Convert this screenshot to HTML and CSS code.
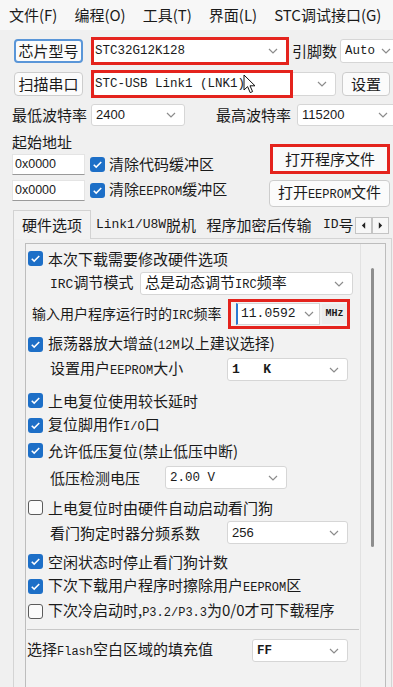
FILE: index.html
```html
<!DOCTYPE html>
<html lang="zh-CN">
<head>
    <meta charset="UTF-8">
    <meta name="viewport" content="width=device-width, initial-scale=1.0">
    <title>STC-ISP</title>
    <link rel="stylesheet" href="styles.css">
</head>
<body>
    <div class="menubar">
        <span>文件(F)</span>
        <span>编程(O)</span>
        <span>工具(T)</span>
        <span>界面(L)</span>
        <span>STC调试接口(G)</span>
    </div>

    <div class="row row-chip">
        <button class="btn btn-focus btn-chip">芯片型号</button>
        <div class="redbox box-chip">
            <div class="combo">
                <span class="val">STC32G12K128</span>
                <svg class="chev" viewBox="0 0 10 6"><path d="M1 1l4 4 4-4"/></svg>
            </div>
        </div>
        <span class="lbl lbl-pin">引脚数</span>
        <div class="combo combo-pin">
            <span class="val">Auto</span>
            <svg class="chev" viewBox="0 0 10 6"><path d="M1 1l4 4 4-4"/></svg>
        </div>
    </div>

    <div class="row row-port">
        <button class="btn btn-port">扫描串口</button>
        <div class="combo combo-port">
            <span class="val">STC-USB Link1 (LNK1)</span>
            <svg class="chev" viewBox="0 0 10 6"><path d="M1 1l4 4 4-4"/></svg>
            <div class="redbox mark-port"></div>
            <svg class="cursor" viewBox="0 0 13 20"><path d="M1 1v15l3.6-3.4 2.6 6 2.4-1-2.6-5.8H12z"/></svg>
        </div>
        <button class="btn btn-set">设置</button>
    </div>

    <div class="row row-baud">
        <span class="lbl">最低波特率</span>
        <div class="combo combo-lo">
            <span class="val sans">2400</span>
            <svg class="chev" viewBox="0 0 10 6"><path d="M1 1l4 4 4-4"/></svg>
        </div>
        <span class="lbl lbl-hi">最高波特率</span>
        <div class="combo combo-hi">
            <span class="val sans">115200</span>
            <svg class="chev" viewBox="0 0 10 6"><path d="M1 1l4 4 4-4"/></svg>
        </div>
    </div>

    <div class="addr">
        <div class="addr-left">
            <div class="lbl addr-title">起始地址</div>
            <div class="row addr-row">
                <div class="edit">0x0000</div>
                <span class="check on"><svg viewBox="0 0 16 16"><path d="M4 8.2l2.6 2.6L12 5.4"/></svg></span>
                <span class="lbl">清除代码缓冲区</span>
            </div>
            <div class="row addr-row">
                <div class="edit">0x0000</div>
                <span class="check on"><svg viewBox="0 0 16 16"><path d="M4 8.2l2.6 2.6L12 5.4"/></svg></span>
                <span class="lbl">清除<span class="m">EEPROM</span>缓冲区</span>
            </div>
        </div>
        <div class="addr-right">
            <div class="redbox box-open">打开程序文件</div>
            <button class="btn btn-eeprom">打开<span class="m">EEPROM</span>文件</button>
        </div>
    </div>

    <div class="tabs">
        <div class="tab active">硬件选项</div>
        <div class="tab tab-link"><span class="m tm">Link1/U8W</span>脱机</div>
        <div class="tab tab-enc">程序加密后传输</div>
        <div class="tab tab-id"><span class="m tm">ID</span>号</div>
        <div class="tab-arrows">
            <span><svg viewBox="0 0 6 8"><path d="M5 0v8L1 4z"/></svg></span>
            <span><svg viewBox="0 0 6 8"><path d="M1 0v8l4-4z"/></svg></span>
        </div>
    </div>

    <div class="panel">
        <div class="group">
            <div class="group-body">
                <div class="row opt">
                    <span class="check on"><svg viewBox="0 0 16 16"><path d="M4 8.2l2.6 2.6L12 5.4"/></svg></span>
                    <span class="lbl">本次下载需要修改硬件选项</span>
                </div>
                <div class="row field">
                    <span class="lbl fl-in"><span class="m tm">IRC</span>调节模式</span>
                    <div class="combo c-mode">
                        <span class="val cjk">总是动态调节<span class="m">IRC</span>频率</span>
                        <svg class="chev" viewBox="0 0 10 6"><path d="M1 1l4 4 4-4"/></svg>
                    </div>
                </div>
                <div class="row field field-irc mt3">
                    <span class="lbl fl-irc">输入用户程序运行时的<span class="m">IRC</span>频率</span>
                    <div class="redbox box-irc">
                        <div class="combo c-freq">
                            <span class="val big">11.0592</span>
                            <svg class="chev" viewBox="0 0 10 6"><path d="M1 1l4 4 4-4"/></svg>
                        </div>
                        <span class="unit">MHz</span>
                    </div>
                </div>
                <div class="row opt mt3">
                    <span class="check on"><svg viewBox="0 0 16 16"><path d="M4 8.2l2.6 2.6L12 5.4"/></svg></span>
                    <span class="lbl">振荡器放大增益(<span class="m">12M</span>以上建议选择)</span>
                </div>
                <div class="row field">
                    <span class="lbl fl-in">设置用户<span class="m">EEPROM</span>大小</span>
                    <div class="combo c-size">
                        <span class="val mid">1   K</span>
                        <svg class="chev" viewBox="0 0 10 6"><path d="M1 1l4 4 4-4"/></svg>
                    </div>
                </div>
                <div class="row opt mt6">
                    <span class="check on"><svg viewBox="0 0 16 16"><path d="M4 8.2l2.6 2.6L12 5.4"/></svg></span>
                    <span class="lbl">上电复位使用较长延时</span>
                </div>
                <div class="row opt">
                    <span class="check on"><svg viewBox="0 0 16 16"><path d="M4 8.2l2.6 2.6L12 5.4"/></svg></span>
                    <span class="lbl">复位脚用作<span class="m">I/O</span>口</span>
                </div>
                <div class="row opt">
                    <span class="check on"><svg viewBox="0 0 16 16"><path d="M4 8.2l2.6 2.6L12 5.4"/></svg></span>
                    <span class="lbl">允许低压复位(禁止低压中断)</span>
                </div>
                <div class="row field mt2">
                    <span class="lbl fl-in fl-volt">低压检测电压</span>
                    <div class="combo c-volt">
                        <span class="val">2.00 V</span>
                        <svg class="chev" viewBox="0 0 10 6"><path d="M1 1l4 4 4-4"/></svg>
                    </div>
                </div>
                <div class="row opt mt5">
                    <span class="check off"></span>
                    <span class="lbl">上电复位时由硬件自动启动看门狗</span>
                </div>
                <div class="row field">
                    <span class="lbl fl-in">看门狗定时器分频系数</span>
                    <div class="combo c-size">
                        <span class="val sans">256</span>
                        <svg class="chev" viewBox="0 0 10 6"><path d="M1 1l4 4 4-4"/></svg>
                    </div>
                </div>
                <div class="row opt mt4">
                    <span class="check on"><svg viewBox="0 0 16 16"><path d="M4 8.2l2.6 2.6L12 5.4"/></svg></span>
                    <span class="lbl">空闲状态时停止看门狗计数</span>
                </div>
                <div class="row opt">
                    <span class="check on"><svg viewBox="0 0 16 16"><path d="M4 8.2l2.6 2.6L12 5.4"/></svg></span>
                    <span class="lbl">下次下载用户程序时擦除用户<span class="m">EEPROM</span>区</span>
                </div>
                <div class="row opt">
                    <span class="check off"></span>
                    <span class="lbl">下次冷启动时,<span class="m">P3.2/P3.3</span>为0/0才可下载程序</span>
                </div>
                <div class="sep"></div>
                <div class="row field mt8">
                    <span class="lbl fl-fill">选择<span class="m">Flash</span>空白区域的填充值</span>
                    <div class="combo c-fill">
                        <span class="val bold">FF</span>
                        <svg class="chev" viewBox="0 0 10 6"><path d="M1 1l4 4 4-4"/></svg>
                    </div>
                </div>
            </div>
            <div class="scroll"><div class="thumb"></div></div>
        </div>
    </div>
</body>
</html>
```

FILE: styles.css
```css
* {
    box-sizing: border-box;
}
body {
    margin: 0;
    width: 393px;
    height: 687px;
    overflow: hidden;
    background: #f0f0f0;
    color: #1a1a1a;
    font-family: "Noto Sans CJK SC", "Liberation Sans", sans-serif;
    font-size: 15px;
    line-height: 20px;
}
.m {
    font-family: "Liberation Mono", monospace;
    font-size: 12px;
}
.menubar {
    height: 30px;
    display: flex;
    align-items: center;
    gap: 17px;
    padding-left: 9px;
    background: #f7f7f7;
}
.row {
    display: flex;
    align-items: center;
}
.row > * {
    flex-shrink: 0;
}
.lbl {
    white-space: nowrap;
}
.btn {
    height: 24px;
    padding: 0;
    border: 1px solid #cdcdcd;
    border-radius: 4px;
    background: #fbfbfb;
    color: inherit;
    font: inherit;
    line-height: 20px;
}
.btn-focus {
    border: 2px solid #5a96d8;
}
.combo {
    position: relative;
    display: flex;
    align-items: center;
    height: 23px;
    padding-left: 4px;
    background: #fff;
    border: 1px solid #d6d6d6;
    border-radius: 3px;
}
.combo .val {
    flex: 1;
    white-space: pre;
    overflow: hidden;
    font-family: "Liberation Mono", monospace;
    font-size: 12.5px;
}
.combo .val.sans {
    font-family: "Liberation Sans", sans-serif;
    font-size: 13px;
}
.combo .val.cjk {
    font-family: "Noto Sans CJK SC", sans-serif;
    font-size: 15px;
}
.combo .val.big {
    font-size: 13px;
}
.combo .val.mid {
    font-size: 13px;
    font-weight: bold;
}
.combo .val.bold {
    font-weight: bold;
}
.chev {
    width: 10px;
    height: 6px;
    margin-right: 8px;
    flex-shrink: 0;
    fill: none;
    stroke: #8c8c8c;
    stroke-width: 1.2;
}
.redbox {
    border: 3px solid #e4231d;
}

/* top rows */
.row-chip {
    height: 28px;
    margin-top: 7px;
    padding-left: 14px;
}
.btn-chip {
    width: 69px;
}
.box-chip {
    width: 198px;
    height: 28px;
    margin-left: 8px;
}
.box-chip .combo {
    height: 100%;
    border: none;
    border-radius: 0;
    padding-left: 1px;
}
.lbl-pin {
    margin-left: 3px;
}
.combo-pin {
    width: 60px;
    height: 24px;
    margin-left: 3px;
}
.row-port {
    height: 28px;
    margin-top: 5px;
    padding-left: 14px;
}
.btn-port {
    width: 69px;
}
.combo-port {
    width: 243px;
    height: 24px;
    margin-left: 10px;
    padding-left: 1px;
}
.mark-port {
    position: absolute;
    left: -3px;
    top: -3px;
    width: 202px;
    height: 28px;
}
.cursor {
    position: absolute;
    left: 149px;
    top: 1px;
    width: 13px;
    height: 20px;
    fill: #fff;
    stroke: #111;
    stroke-width: 1;
}
.btn-set {
    width: 48px;
    margin-left: 6px;
}
.row-baud {
    height: 22px;
    margin-top: 6px;
    padding-left: 12px;
}
.combo-lo {
    width: 94px;
    height: 22px;
    margin-left: 4px;
}
.lbl-hi {
    margin-left: 31px;
}
.combo-hi {
    width: 100px;
    height: 22px;
    margin-left: 6px;
}

/* address block */
.addr {
    display: flex;
    margin-top: 7px;
    padding: 0 3px 0 12px;
}
.addr-title {
    height: 18px;
    line-height: 18px;
}
.addr-row {
    height: 26px;
}
.edit {
    width: 73px;
    height: 21px;
    padding-left: 2px;
    background: #fff;
    border: 1px solid #e4e4e4;
    border-bottom-color: #9a9a9a;
    font-family: "Liberation Sans", sans-serif;
    font-size: 12.5px;
    line-height: 19px;
}
.check {
    display: flex;
    align-items: center;
    justify-content: center;
    width: 15px;
    height: 15px;
    border-radius: 3px;
}
.check svg {
    width: 15px;
    height: 15px;
    fill: none;
    stroke: #fff;
    stroke-width: 1.6;
}
.check.on {
    background: #1d6fc7;
}
.check.off {
    border: 1px solid #5c5c5c;
    background: #fbfbfb;
}
.addr-row .check {
    margin: 0 4px 0 5px;
}
.addr-right {
    margin-left: auto;
    display: flex;
    flex-direction: column;
    align-items: flex-end;
}
.box-open {
    display: flex;
    align-items: center;
    justify-content: center;
    width: 120px;
    height: 30px;
    margin-top: 11px;
    background: #fafafa;
}
.btn-eeprom {
    width: 121px;
    height: 27px;
    margin-top: 6px;
}

/* tabs */
.tabs {
    display: flex;
    align-items: flex-end;
    height: 28px;
    margin-top: 3px;
    padding-left: 13px;
}
.tab {
    display: flex;
    align-items: center;
    justify-content: center;
    height: 26px;
    white-space: nowrap;
}
.tab.active {
    position: relative;
    width: 78px;
    height: 29px;
    margin-bottom: -1px;
    background: #f2f2f2;
    border: 1px solid #d2d2d2;
    border-bottom: none;
}
.tm {
    font-size: 13px;
}
.tab-link {
    width: 110px;
}
.tab-enc {
    width: 116px;
}
.tab-id {
    width: 38px;
    justify-content: flex-start;
    padding-left: 6px;
}
.tab-arrows {
    display: flex;
    align-self: center;
    margin-top: 3px;
}
.tab-arrows span {
    display: flex;
    align-items: center;
    justify-content: center;
    width: 17px;
    height: 17px;
    background: #f7f7f7;
    border: 1px solid #c4c4c4;
}
.tab-arrows svg {
    width: 5px;
    height: 7px;
    fill: #222;
}

/* hardware options panel */
.panel {
    width: 379px;
    height: 460px;
    margin-left: 13px;
    padding: 4px 5px 0 11px;
    border: 1px solid #d4d4d4;
    border-bottom: none;
}
.group {
    display: flex;
    height: 100%;
    background: #f2f2f2;
    border: 1px solid #bdbdbd;
    border-bottom: none;
}
.group-body {
    width: 334px;
    padding-top: 2px;
}
.scroll {
    flex: 1;
    border-left: 1px solid #e2e2e2;
}
.thumb {
    width: 3px;
    height: 279px;
    margin: 24px 0 0 10px;
    background: #8e8e8e;
    border-radius: 2px;
}
.opt {
    height: 25px;
    padding-left: 2px;
}
.opt .check {
    margin-right: 5px;
}
.field {
    height: 25px;
}
.field .combo {
    margin-left: auto;
}
.fl-in {
    padding-left: 24px;
}
.c-mode {
    width: 213px;
    margin-right: 7px;
}
.field-irc {
    height: 30px;
}
.fl-irc {
    flex: 1;
    padding-left: 6px;
    font-size: 14px;
}
.box-irc {
    display: flex;
    align-items: center;
    gap: 2px;
    width: 122px;
    height: 30px;
    margin-right: 10px;
    padding-left: 5px;
}
.field .c-freq {
    width: 84px;
    height: 22px;
    margin-left: 0;
    padding-left: 3px;
    border-left: 2px solid #2a78d2;
    border-radius: 0;
}
.c-freq .chev {
    margin-right: 5px;
}
.unit {
    flex: 1;
    height: 20px;
    background: #ececec;
    font-family: "Liberation Mono", monospace;
    font-size: 10px;
    font-weight: bold;
    line-height: 20px;
    text-align: center;
}
.c-size {
    width: 121px;
    margin-right: 12px;
}
.fl-volt {
    width: 139px;
}
.field .c-volt {
    width: 122px;
    margin-left: 0;
}
.sep {
    width: 332px;
    margin: 5px 0 0 1px;
    border-top: 1px solid #c8c8c8;
}
.fl-fill {
    padding-left: 1px;
}
.c-fill {
    width: 96px;
    margin-right: 12px;
}
.mt2 {
    margin-top: 2px;
}
.mt3 {
    margin-top: 3px;
}
.mt4 {
    margin-top: 4px;
}
.mt5 {
    margin-top: 5px;
}
.mt6 {
    margin-top: 6px;
}
.mt8 {
    margin-top: 8px;
}
```
